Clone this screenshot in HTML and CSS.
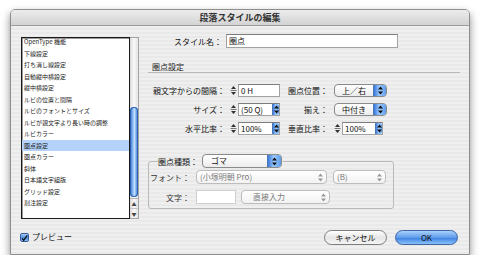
FILE: index.html
```html
<!DOCTYPE html>
<html lang="ja">
<head>
    <meta charset="UTF-8">
    <title>段落スタイルの編集</title>
    <link rel="stylesheet" href="styles.css">
</head>
<body>

    <div class="window">
        <div class="titlebar">段落スタイルの編集</div>

        <div class="content">
            <!-- 左側：カテゴリ一覧 -->
            <div class="side">
                <div class="listbox">
                    <ul class="list">
                        <li>OpenType 機能</li>
                        <li>下線設定</li>
                        <li>打ち消し線設定</li>
                        <li>自動縦中横設定</li>
                        <li>縦中横設定</li>
                        <li>ルビの位置と間隔</li>
                        <li>ルビのフォントとサイズ</li>
                        <li>ルビが親文字より長い時の調整</li>
                        <li>ルビカラー</li>
                        <li class="selected">圏点設定</li>
                        <li>圏点カラー</li>
                        <li>斜体</li>
                        <li>日本語文字組版</li>
                        <li>グリッド設定</li>
                        <li>割注設定</li>
                    </ul>
                    <div class="scrollbar">
                        <div class="thumb"></div>
                        <div class="scroll-arrows">
                            <span>▲</span>
                            <span>▼</span>
                        </div>
                    </div>
                </div>
                <label class="preview">
                    <span class="checkbox">
                        <svg width="9" height="9" viewBox="0 0 9 9"><path d="M1.5 4.5 L3.5 7 L8 0.5" fill="none" stroke="#111" stroke-width="1.6"/></svg>
                    </span>
                    プレビュー
                </label>
            </div>

            <!-- 右側：設定 -->
            <div class="main">
                <div class="name-row">
                    <span class="label name-label">スタイル名：</span>
                    <div class="textfield name-field">圏点</div>
                </div>

                <div class="section-title">圏点設定</div>

                <div class="form-row">
                    <span class="label col1">親文字からの間隔：</span>
                    <div class="spin w50">
                        <svg class="stepper" width="7" height="11" viewBox="0 0 7 11"><path d="M3.5 1 L6 4 H1 Z M3.5 10 L6 7 H1 Z" fill="#333"/><path d="M0.5 5.5 H6.5" stroke="#777"/></svg>
                        <div class="textfield">0 H</div>
                    </div>
                    <span class="label col2">圏点位置：</span>
                    <div class="popup w53">
                        <span class="val">上／右</span>
                        <span class="blue-arrows"><svg width="5" height="9" viewBox="0 0 5 9"><path d="M2.5 0.5 L5 3.5 H0 Z M2.5 8.5 L5 5.5 H0 Z" fill="#111"/></svg></span>
                    </div>
                </div>

                <div class="form-row">
                    <span class="label col1">サイズ：</span>
                    <div class="spin w50">
                        <svg class="stepper" width="7" height="11" viewBox="0 0 7 11"><path d="M3.5 1 L6 4 H1 Z M3.5 10 L6 7 H1 Z" fill="#333"/><path d="M0.5 5.5 H6.5" stroke="#777"/></svg>
                        <div class="textfield combo">(50 Q)<span class="blue-arrows"><svg width="5" height="9" viewBox="0 0 5 9"><path d="M2.5 0.5 L5 3.5 H0 Z M2.5 8.5 L5 5.5 H0 Z" fill="#111"/></svg></span></div>
                    </div>
                    <span class="label col2">揃え：</span>
                    <div class="popup w53">
                        <span class="val">中付き</span>
                        <span class="blue-arrows"><svg width="5" height="9" viewBox="0 0 5 9"><path d="M2.5 0.5 L5 3.5 H0 Z M2.5 8.5 L5 5.5 H0 Z" fill="#111"/></svg></span>
                    </div>
                </div>

                <div class="form-row">
                    <span class="label col1">水平比率：</span>
                    <div class="spin w50">
                        <svg class="stepper" width="7" height="11" viewBox="0 0 7 11"><path d="M3.5 1 L6 4 H1 Z M3.5 10 L6 7 H1 Z" fill="#333"/><path d="M0.5 5.5 H6.5" stroke="#777"/></svg>
                        <div class="textfield combo">100%<span class="blue-arrows"><svg width="5" height="9" viewBox="0 0 5 9"><path d="M2.5 0.5 L5 3.5 H0 Z M2.5 8.5 L5 5.5 H0 Z" fill="#111"/></svg></span></div>
                    </div>
                    <span class="label col2">垂直比率：</span>
                    <div class="spin w49">
                        <svg class="stepper" width="7" height="11" viewBox="0 0 7 11"><path d="M3.5 1 L6 4 H1 Z M3.5 10 L6 7 H1 Z" fill="#333"/><path d="M0.5 5.5 H6.5" stroke="#777"/></svg>
                        <div class="textfield combo">100%<span class="blue-arrows"><svg width="5" height="9" viewBox="0 0 5 9"><path d="M2.5 0.5 L5 3.5 H0 Z M2.5 8.5 L5 5.5 H0 Z" fill="#111"/></svg></span></div>
                    </div>
                </div>

                <fieldset class="group">
                    <legend class="group-legend">
                        <span class="label">圏点種類：</span>
                        <div class="popup w80">
                            <span class="val left">ゴマ</span>
                            <span class="blue-arrows wide"><svg width="5" height="9" viewBox="0 0 5 9"><path d="M2.5 0.5 L5 3.5 H0 Z M2.5 8.5 L5 5.5 H0 Z" fill="#111"/></svg></span>
                        </div>
                    </legend>
                    <div class="group-row">
                        <span class="label gcol">フォント：</span>
                        <div class="popup disabled w131">
                            <span class="val left">(小塚明朝 Pro)</span>
                            <span class="gray-arrows"><svg width="5" height="9" viewBox="0 0 5 9"><path d="M2.5 0.5 L5 3.5 H0 Z M2.5 8.5 L5 5.5 H0 Z" fill="#999"/></svg></span>
                        </div>
                        <div class="popup disabled w53 gap6">
                            <span class="val left">(B)</span>
                            <span class="gray-arrows"><svg width="5" height="9" viewBox="0 0 5 9"><path d="M2.5 0.5 L5 3.5 H0 Z M2.5 8.5 L5 5.5 H0 Z" fill="#999"/></svg></span>
                        </div>
                    </div>
                    <div class="group-row">
                        <span class="label gcol">文字：</span>
                        <div class="textfield char-field"></div>
                        <div class="popup disabled w89 gap5">
                            <span class="val left pad">直接入力</span>
                            <span class="gray-arrows"><svg width="5" height="9" viewBox="0 0 5 9"><path d="M2.5 0.5 L5 3.5 H0 Z M2.5 8.5 L5 5.5 H0 Z" fill="#999"/></svg></span>
                        </div>
                    </div>
                </fieldset>

                <div class="buttons">
                    <button class="btn">キャンセル</button>
                    <button class="btn btn-default">OK</button>
                </div>
            </div>
        </div>
    </div>

</body>
</html>
```

FILE: styles.css
```css
body {
    margin: 0;
    padding: 9px 0 0 10px;
    background-color: #ffffff;
    font-family: "Noto Sans CJK JP", "DejaVu Sans", sans-serif;
    color: #111;
}

.window {
    width: 460px;
    height: 246px;
    box-sizing: border-box;
    border: 1px solid #8e8e8e;
    border-radius: 5px 5px 0 0;
    display: flex;
    flex-direction: column;
    background: repeating-linear-gradient(to bottom, #efefef 0 2px, #e9e9e9 2px 4px);
    box-shadow: 0 4px 8px rgba(0, 0, 0, 0.45);
    overflow: hidden;
}

.titlebar {
    height: 15px;
    flex: none;
    border-bottom: 1px solid #9c9c9c;
    background: linear-gradient(to bottom, #ececec, #d3d3d3);
    text-align: center;
    font-size: 9px;
    line-height: 15px;
    font-weight: bold;
    color: #333;
}

.content {
    flex: 1;
    display: flex;
    padding: 8px 0 0 10px;
}

/* 左側のリスト */
.side {
    width: 118px;
    padding-top: 3px;
    display: flex;
    flex-direction: column;
}

.listbox {
    height: 182px;
    display: flex;
}

.list {
    flex: 1;
    margin: 0;
    padding: 0;
    list-style: none;
    background-color: #ffffff;
    border: 1px solid #1a1a1a;
    box-shadow: inset 1px 1px 0 #9a9a9a;
    overflow: hidden;
}

.list li {
    height: 11.5px;
    line-height: 11.5px;
    font-size: 6px;
    padding-left: 2px;
    color: #222;
    white-space: nowrap;
}

.list li:first-child {
    margin-top: -2px;
}

.list li.selected {
    background-color: #b4d2fa;
}

.scrollbar {
    width: 8px;
    border: 1px solid #a5a5a5;
    border-left: none;
    display: flex;
    flex-direction: column;
    background: linear-gradient(to right, #d9d9d9, #fafafa 50%, #e2e2e2);
}

.thumb {
    margin-top: 69px;
    height: 90px;
    border-radius: 4px;
    background: linear-gradient(to right, #2d67c9, #86b8f4 35%, #c4e0ff 55%, #4d8be0 90%);
    box-shadow: inset 0 0 0 1px #2f5fae;
}

.scroll-arrows {
    margin-top: auto;
    display: flex;
    flex-direction: column;
    border-top: 1px solid #b5b5b5;
}

.scroll-arrows span {
    height: 9px;
    font-size: 5px;
    line-height: 9px;
    text-align: center;
    color: #444;
}

.scroll-arrows span + span {
    border-top: 1px solid #c5c5c5;
}

.preview {
    display: flex;
    align-items: center;
    gap: 3px;
    margin-top: 13px;
    margin-left: -1px;
    font-size: 8px;
    line-height: 10px;
}

.checkbox {
    width: 9px;
    height: 9px;
    box-sizing: border-box;
    border: 1px solid #3a5f9a;
    border-radius: 2px;
    background: linear-gradient(to bottom, #a9cdf6, #4b8de0 55%, #8ec3fa);
    display: flex;
}

/* 右側のフォーム */
.main {
    width: 312px;
    margin-left: 9px;
    display: flex;
    flex-direction: column;
}

.label {
    font-size: 8px;
    line-height: 13px;
    white-space: nowrap;
}

.textfield {
    height: 13px;
    box-sizing: border-box;
    background-color: #ffffff;
    border: 1px solid #a2a2a2;
    border-top-color: #7c7c7c;
    font-size: 8px;
    line-height: 11px;
    padding-left: 2px;
}

.name-row {
    display: flex;
    align-items: center;
}

.name-label {
    width: 74px;
    text-align: right;
}

.name-field {
    width: 172px;
    height: 14px;
    margin-left: 4px;
    line-height: 12px;
}

.section-title {
    margin-top: 14px;
    font-size: 8px;
    line-height: 9px;
    padding-left: 4px;
    padding-bottom: 1px;
    border-bottom: 1px solid #b9b9b9;
    color: #222;
}

.form-row {
    display: flex;
    align-items: center;
    margin-top: 6px;
}

.section-title + .form-row {
    margin-top: 11px;
}

.col1 {
    width: 77px;
    text-align: right;
    margin-right: 5px;
}

.col2 {
    width: 48px;
    text-align: right;
    margin-right: 6px;
}

.spin {
    display: flex;
    align-items: center;
    gap: 1px;
}

.spin .textfield {
    flex: 1;
}

.w50 { width: 50px; }
.w49 { width: 49px; }
.w53 { width: 53px; }
.w80 { width: 80px; }
.w89 { width: 89px; }
.w131 { width: 131px; }

.combo {
    display: flex;
    align-items: center;
    justify-content: space-between;
    padding-right: 0;
}

.combo .blue-arrows {
    width: 6px;
    height: 11px;
    border-radius: 0 2px 2px 0;
}

.popup {
    height: 13px;
    box-sizing: border-box;
    display: flex;
    border: 1px solid #8a8a8a;
    border-radius: 4px;
    background: linear-gradient(to bottom, #ffffff, #ececec);
    overflow: hidden;
}

.popup .val {
    flex: 1;
    text-align: center;
    font-size: 8px;
    line-height: 11px;
}

.popup .val.left {
    text-align: left;
    padding-left: 3px;
}

.popup .val.pad {
    padding-left: 11px;
}

.blue-arrows {
    width: 12px;
    flex: none;
    display: flex;
    align-items: center;
    justify-content: center;
    background: linear-gradient(to right, #3b78d8, #9ccaff 45%, #5c9be9);
    border-left: 1px solid #4a77b8;
}

.blue-arrows.wide {
    width: 13px;
}

.gray-arrows {
    width: 11px;
    flex: none;
    display: flex;
    align-items: center;
    justify-content: center;
}

.popup.disabled {
    border-color: #bdbdbd;
    background: linear-gradient(to bottom, #ffffff, #f2f2f2);
}

.popup.disabled .val {
    color: #7a7a7a;
}

.group {
    margin: 19px 0 0 0;
    width: 246px;
    box-sizing: border-box;
    padding: 0 0 4px 0;
    border: 1px solid #b9b9b9;
    border-radius: 3px;
}

.group-legend {
    display: flex;
    align-items: center;
    margin-left: 9px;
    padding: 0 1px 0 0;
}

.group-legend .popup {
    height: 14px;
    margin-left: 4px;
}

.group-legend .popup .val {
    line-height: 12px;
    padding-left: 8px;
}

.group-row {
    display: flex;
    align-items: center;
    margin-top: 6px;
}

.group-legend + .group-row {
    margin-top: 2px;
}

.group-row .popup,
.group-row .textfield {
    height: 14px;
}

.gcol {
    width: 41px;
    text-align: right;
    margin-right: 6px;
    color: #333;
}

.char-field {
    width: 40px;
    border-color: #cfcfcf;
}

.gap6 { margin-left: 6px; }
.gap5 { margin-left: 5px; }

.buttons {
    display: flex;
    justify-content: flex-end;
    gap: 8px;
    margin-top: 21px;
    padding-right: 2px;
}

.btn {
    width: 63px;
    height: 15px;
    padding: 0;
    border: 1px solid #7d7d7d;
    border-radius: 8px;
    background: linear-gradient(to bottom, #ffffff, #e6e6e6 50%, #f4f4f4);
    font-family: "Noto Sans CJK JP", "DejaVu Sans", sans-serif;
    font-size: 8px;
    line-height: 13px;
    color: #111;
}

.btn-default {
    border-color: #3f63a3;
    background: linear-gradient(to bottom, #a9d0fb, #5f9ceb 50%, #3c7de0 51%, #88c2fb);
}
```
